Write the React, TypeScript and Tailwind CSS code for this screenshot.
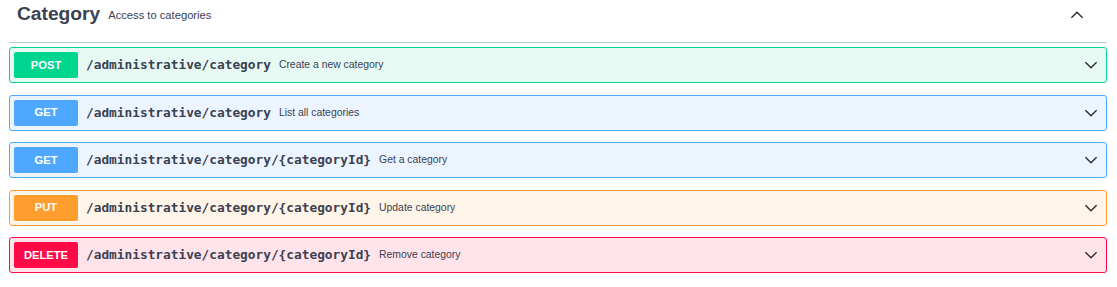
import React from 'react';

type Method = 'POST' | 'GET' | 'PUT' | 'DELETE';

interface Operation {
    method: Method;
    path: string;
    summary: string;
}

const operations: Operation[] = [
    { method: 'POST', path: '/administrative/category', summary: 'Create a new category' },
    { method: 'GET', path: '/administrative/category', summary: 'List all categories' },
    { method: 'GET', path: '/administrative/category/{categoryId}', summary: 'Get a category' },
    { method: 'PUT', path: '/administrative/category/{categoryId}', summary: 'Update category' },
    { method: 'DELETE', path: '/administrative/category/{categoryId}', summary: 'Remove category' },
];

const styles: Record<Method, { block: string; badge: string }> = {
    POST: { block: 'border-[#00d68f] bg-[#e6faf3]', badge: 'bg-[#00d68f]' },
    GET: { block: 'border-[#4ea8ff] bg-[#ecf5ff]', badge: 'bg-[#4ea8ff]' },
    PUT: { block: 'border-[#ff9d2e] bg-[#fff4e8]', badge: 'bg-[#ff9d2e]' },
    DELETE: { block: 'border-[#ff0a47] bg-[#ffe3ea]', badge: 'bg-[#ff0a47]' },
};

const Chevron = ({ up = false }: { up?: boolean }) => (
    <svg width="16" height="16" viewBox="0 0 20 20" className="text-[#303030]">
        {up ? (
            <path d="M3 13.5 L10 6.5 L17 13.5" fill="none" stroke="currentColor" strokeWidth="1.8" />
        ) : (
            <path d="M3 6.5 L10 13.5 L17 6.5" fill="none" stroke="currentColor" strokeWidth="1.8" />
        )}
    </svg>
);

const OperationRow = ({ op }: { op: Operation }) => {
    const s = styles[op.method];
    return (
        <div className={`flex items-center h-9 mb-[11.5px] border rounded-[3px] px-1 ${s.block}`}>
            <span
                className={`w-16 h-[26px] flex items-center justify-center rounded-[2px] text-white text-[11.2px] font-bold ${s.badge}`}
            >
                {op.method}
            </span>
            <span
                className="ml-2 text-[12.8px] font-bold text-[#3b4151]"
                style={{ fontFamily: '"DejaVu Sans Mono", monospace' }}
            >
                {op.path}
            </span>
            <span className="ml-2 text-[10.4px] text-[#3b4151] flex-1">
                {op.summary}
            </span>
            <span className="mr-[3px] flex items-center">
                <Chevron />
            </span>
        </div>
    );
};

const App = () => {
    return (
        <div className="w-[1117px] h-[287px] bg-white pl-[9px] pr-[10px]" style={{ fontFamily: '"Liberation Sans", Arial, sans-serif' }}>
            {/* Tag header */}
            <div className="flex items-center h-[43px] pb-[13px] pl-2 pr-[22px] border-b border-[#3b4151]/30 mb-1">
                <span className="text-[19.2px] font-bold text-[#3b4151]">Category</span>
                <span className="ml-2 text-[11.2px] text-[#3b4151] flex-1 pt-[2px]">Access to categories</span>
                <Chevron up />
            </div>

            {operations.map((op, i) => (
                <OperationRow key={i} op={op} />
            ))}
        </div>
    );
};

export default App;
